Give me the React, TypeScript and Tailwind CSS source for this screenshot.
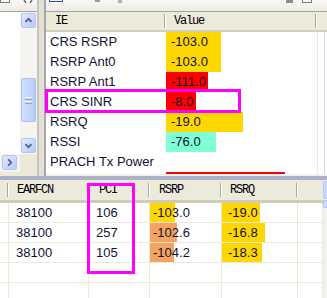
import React from "react";

type Bar = { text: string; w: number; c: string };

const topRows: { ie: string; bar: Bar | null }[] = [
  { ie: "CRS RSRP", bar: { text: "-103.0", w: 55, c: "bg-[#ffd700]" } },
  { ie: "RSRP Ant0", bar: { text: "-103.0", w: 55, c: "bg-[#ffd700]" } },
  { ie: "RSRP Ant1", bar: { text: "-111.0", w: 42, c: "bg-[#ff0000]" } },
  { ie: "CRS SINR", bar: { text: "-8.0", w: 30, c: "bg-[#ff0000]" } },
  { ie: "RSRQ", bar: { text: "-19.0", w: 77, c: "bg-[#ffd700]" } },
  { ie: "RSSI", bar: { text: "-76.0", w: 50, c: "bg-[#7fffd4]" } },
  { ie: "PRACH Tx Power", bar: null },
  { ie: "", bar: { text: "", w: 119, c: "bg-[#ff0000]" } },
];

const cells: { earfcn: string; pci: string; rsrp: Bar; rsrq: Bar }[] = [
  {
    earfcn: "38100",
    pci: "106",
    rsrp: { text: "-103.0", w: 25, c: "bg-[#ffd700]" },
    rsrq: { text: "-19.0", w: 38, c: "bg-[#ffd700]" },
  },
  {
    earfcn: "38100",
    pci: "257",
    rsrp: { text: "-102.6", w: 27, c: "bg-[#f4a460]" },
    rsrq: { text: "-16.8", w: 43, c: "bg-[#ffd700]" },
  },
  {
    earfcn: "38100",
    pci: "105",
    rsrp: { text: "-104.2", w: 24, c: "bg-[#f4a460]" },
    rsrq: { text: "-18.3", w: 40, c: "bg-[#ffd700]" },
  },
];

const Sep = () => (
  <div className="h-[14px] w-[2px] shrink-0 border-l border-r border-l-[#aca899] border-r-white" />
);

const ScrollBtn = ({ dir }: { dir: "up" | "down" | "right" }) => {
  const pts =
    dir === "up" ? "4,9 7.5,5.5 11,9" : dir === "down" ? "4,6 7.5,9.5 11,6" : "6,4 9.5,7.5 6,11";
  return (
    <div className="w-[15px] h-[15px] rounded-[2px] border border-[#b4c6f3] bg-linear-to-br from-[#e1eafe] to-[#b6caf8] flex items-center justify-center">
      <svg width="15" height="15" viewBox="0 0 15 15">
        <polyline points={pts} fill="none" stroke="#4d6185" strokeWidth="2" />
      </svg>
    </div>
  );
};

const Toolbar = ({ children }: { children?: React.ReactNode }) => (
  <div className="h-[12px] shrink-0 flex items-start border-b border-[#a3a29c] bg-linear-to-b from-[#f8f8f6] to-[#ecebe6]">
    {children}
  </div>
);

export default function App() {
  return (
    <div className="relative w-[327px] h-[298px] overflow-hidden bg-[#ece9d8] text-[13px] text-[#111133] font-['Liberation_Sans',Arial,sans-serif]">
      {/* upper half */}
      <div className="flex h-[176px]">
        {/* left pane */}
        <div className="w-[37px] flex flex-col">
          <Toolbar>
            <div className="w-[10px] h-[3px] border-x border-b border-[#7b7b7b]" />
            <svg className="ml-[13px]" width="10" height="3" viewBox="0 0 10 3">
              <path d="M1,0 L3,3 M9,0 L7,3" stroke="#6b6b6b" strokeWidth="1.5" />
            </svg>
          </Toolbar>
          <div className="flex h-[160px]">
            <div className="w-[20px] flex flex-col">
              <div className="h-[142px] bg-white" />
              <div className="h-[18px] bg-[#f4f3ee] pt-[1px] pl-[2px]">
                <ScrollBtn dir="right" />
              </div>
            </div>
            <div className="w-[17px] flex flex-col">
              <div className="h-[142px] bg-[#f5f4ef] flex flex-col pt-[1px] pl-[1px]">
                <ScrollBtn dir="up" />
                <div className="h-[50px]" />
                <div className="w-[15px] h-[44px] rounded-[2px] border border-[#a9bdee] bg-linear-to-r from-[#d3e0fd] to-[#b9cdf8] flex flex-col items-center justify-center gap-[1px]">
                  <div className="w-[7px] h-[1px] bg-[#eef3fe]" />
                  <div className="w-[7px] h-[1px] bg-[#8ca4d9]" />
                  <div className="w-[7px] h-[1px] bg-[#eef3fe]" />
                  <div className="w-[7px] h-[1px] bg-[#8ca4d9]" />
                </div>
                <div className="h-[16px]" />
                <ScrollBtn dir="down" />
              </div>
              <div className="h-[18px] bg-[#ece9d8]" />
            </div>
          </div>
          <div className="flex-1 bg-[#ece9d8]" />
        </div>

        {/* splitter */}
        <div className="w-[9px] border-l-2 border-r-2 border-l-[#c7c5bb] border-r-[#a6a6a6] bg-[#e3e1d7]" />

        {/* right pane */}
        <div className="w-[281px] flex flex-col">
          <Toolbar>
            <div className="ml-[3px] w-[14px] h-[2px] border-x border-b border-[#2f55a0]" />
            <div className="ml-[32px] w-[5px] h-[2px] bg-[#9c9c9c]" />
            <div className="ml-[18px] w-[4px] h-[3px] bg-[#b3b3b3]" />
            <div className="ml-[164px] w-[7px] h-[3px] bg-[#8d8d8d]" />
            <div className="ml-[9px] w-[10px] h-[3px] border-x border-b border-[#7a7a7a]" />
          </Toolbar>
          <div className="h-[20px] shrink-0 flex items-center border-b-2 border-[#d2cebe] bg-[#ebeadb] font-['Liberation_Mono',monospace] text-[12px] tracking-[-1.2px] text-black">
            <div className="w-[120px] flex items-center justify-between pl-[9px]">
              <span>IE</span>
              <Sep />
            </div>
            <div className="w-[151px] flex items-center justify-between pl-[8px]">
              <span>Value</span>
              <Sep />
            </div>
          </div>
          <div className="h-[142px] overflow-hidden bg-white flex">
            <div className="w-[271px] flex flex-col">
              {topRows.map((r, i) => (
                <div key={i} className="h-[20px] shrink-0 flex items-center">
                  <div className="w-[120px] pl-[4px] whitespace-nowrap">{r.ie}</div>
                  <div className="w-[151px] h-full">
                    {r.bar && (
                      <div
                        className={`h-full flex items-center pl-[5px] whitespace-nowrap ${r.bar.c}`}
                        style={{ width: r.bar.w }}
                      >
                        {r.bar.text}
                      </div>
                    )}
                  </div>
                </div>
              ))}
            </div>
            <div className="w-[8px] border-l border-[#ece9d8] border-r border-r-[#c4d2f3]" />
          </div>
          <div className="flex-1 bg-[#f1f0ec]" />
        </div>
      </div>

      <div className="h-[4px] bg-[#aab1c8]" />

      {/* lower half */}
      <div className="h-[118px] bg-white flex">
        <div className="w-[323px] flex flex-col">
          <div className="h-[23px] shrink-0 flex items-start border-b-[3px] border-[#d0ccbc] bg-[#ebeadb] font-['Liberation_Mono',monospace] text-[12px] tracking-[-1.2px] text-black">
            <div className="w-[9px] h-[20px] flex items-center justify-end">
              <Sep />
            </div>
            <div className="w-[80px] h-[20px] flex items-center justify-between pl-[8px]">
              <span>EARFCN</span>
              <Sep />
            </div>
            <div className="w-[61px] h-[20px] flex items-center justify-between pl-[10px]">
              <span>PCI</span>
              <Sep />
            </div>
            <div className="w-[72px] h-[20px] flex items-center justify-between pl-[9px]">
              <span>RSRP</span>
              <Sep />
            </div>
            <div className="w-[76px] h-[20px] flex items-center justify-between pl-[8px]">
              <span>RSRQ</span>
              <Sep />
            </div>
          </div>
          {[...cells, null, null].map((c, i) => (
            <div key={i} className="h-[20px] shrink-0 flex border-b border-[#ece9d8]">
              <div className="w-[9px] border-r border-[#ece9d8]" />
              <div className="w-[80px] border-r border-[#ece9d8] flex items-center pl-[7px]">{c?.earfcn}</div>
              <div className="w-[61px] border-r border-[#ece9d8] flex items-center pl-[7px]">{c?.pci}</div>
              <div className="w-[72px] border-r border-[#ece9d8]">
                {c && (
                  <div
                    className={`h-full flex items-center pl-[3px] whitespace-nowrap ${c.rsrp.c}`}
                    style={{ width: c.rsrp.w }}
                  >
                    {c.rsrp.text}
                  </div>
                )}
              </div>
              <div className="w-[76px] border-r border-[#ece9d8]">
                {c && (
                  <div
                    className={`h-full flex items-center pl-[6px] whitespace-nowrap ${c.rsrq.c}`}
                    style={{ width: c.rsrq.w }}
                  >
                    {c.rsrq.text}
                  </div>
                )}
              </div>
              <div className="w-[25px] border-r border-[#ece9d8]" />
            </div>
          ))}
        </div>
        <div className="w-[4px] bg-[#f3f1ec] flex flex-col pt-[1px]">
          <div className="h-[18px] rounded-l-[2px] border border-r-0 border-[#b4c6f3] bg-[#c9d8fc]" />
          <div className="h-[8px] mt-[1px] rounded-l-[2px] border border-r-0 border-[#b4c6f3] bg-[#c9d8fc]" />
        </div>
      </div>

      {/* highlight boxes */}
      <div className="absolute left-[45px] top-[89px] w-[196px] h-[24px] border-[3px] border-[#ff00ff]" />
      <div className="absolute left-[87px] top-[183px] w-[48px] h-[91px] border-[3px] border-[#ff00ff]" />
    </div>
  );
}
